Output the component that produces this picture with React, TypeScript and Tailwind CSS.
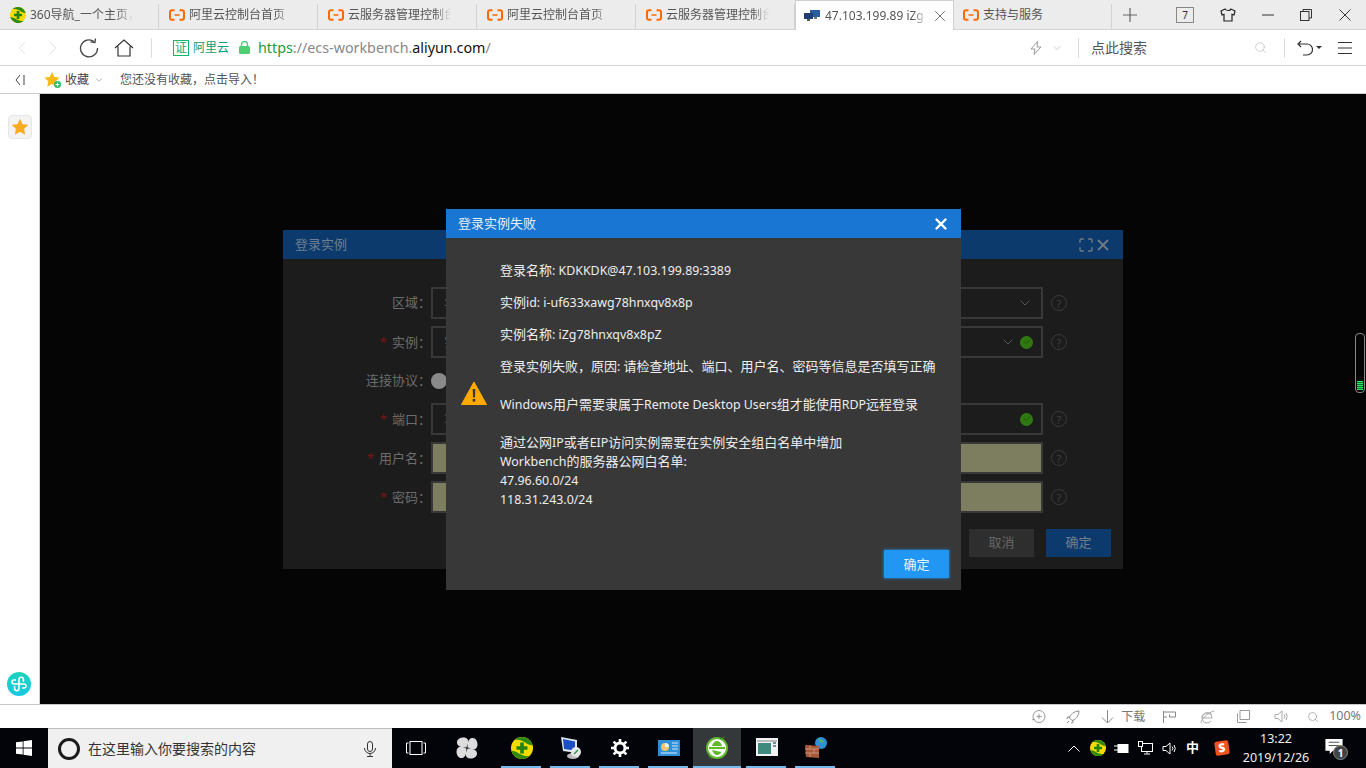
import React from "react";
import { Check, ChevronDown, ChevronLeft, ChevronRight, Maximize, Search, X } from "lucide-react";

const Logo360 = ({ s = 16 }: { s?: number }) => (
  <svg width={s} height={s} viewBox="0 0 24 24" className="shrink-0">
    <circle cx="12" cy="12" r="12" fill="#f7dc00" />
    <path d="M.5 15a12 12 0 0 0 20 5.500C15 22 10 19 7 17c-2-1.200-4.500-1.800-6.500-2zM23.500 9A12 12 0 0 0 3.500 3.500C9 2 14 5 17 7c2 1.200 4.500 1.800 6.500 2z" fill="#2e8b12" />
    <path d="M10 6h4v4h4v4h-4v4h-4v-4H6v-4h4z" fill="#26820f" />
  </svg>
);

const AliLogo = () => (
  <svg width="16" height="12" viewBox="0 0 16 12" className="shrink-0" fill="none">
    <path d="M5.500 1.200H3C1.800 1.200 1 2 1 3.200v5.600c0 1.200.8 2 2 2h2.500M10.500 1.200H13c1.200 0 2 .8 2 2v5.600c0 1.200-.8 2-2 2h-2.500" stroke="#ff6a00" strokeWidth="2" />
    <path d="M5.500 6h5" stroke="#ff6a00" strokeWidth="1.500" />
  </svg>
);

const NetLogo = () => (
  <svg width="16" height="12" viewBox="0 0 16 12" className="shrink-0">
    <rect x="6" y="0" width="10" height="7" fill="#2a5f9e" />
    <rect x="0" y="3" width="9" height="6" fill="#1d3f73" />
    <rect x="3" y="9" width="3" height="2" fill="#555" />
    <rect x="10" y="7" width="3" height="2" fill="#777" />
  </svg>
);

const tabs = [
  { t: "360导航_一个主页，", k: "360" },
  { t: "阿里云控制台首页", k: "ali" },
  { t: "云服务器管理控制台", k: "ali" },
  { t: "阿里云控制台首页", k: "ali" },
  { t: "云服务器管理控制台", k: "ali" },
];

const Tab = ({ t, k }: { t: string; k: string }) => (
  <div className="relative flex h-full w-[159px] shrink-0 items-center gap-[4px] pl-[10px]">
    {k === "360" ? <Logo360 /> : <AliLogo />}
    <span className="w-[108px] overflow-hidden whitespace-nowrap text-[12px] text-[#555] [mask-image:linear-gradient(to_right,black_80%,transparent_96%)]">{t}</span>
    <span className="absolute right-0 bottom-0 h-[25px] w-px bg-[#d2d2d2]" />
  </div>
);

const TopBar = () => (
  <div className="flex h-[30px] shrink-0 items-stretch border-b border-[#d3d3d3] bg-[#ececec]">
    {tabs.map((x, i) => <Tab key={i} {...x} />)}
    <div className="relative z-10 mb-[-1px] flex h-[30px] w-[159px] shrink-0 items-center border-x border-t border-[#cfcfcf] bg-white pl-[8px]">
      <NetLogo />
      <span className="ml-[5px] w-[103px] overflow-hidden whitespace-nowrap text-[12px] text-[#555] [mask-image:linear-gradient(to_right,black_85%,transparent)]">47.103.199.89 iZg</span>
      <X size={18} strokeWidth={1} className="ml-[3px] text-[#444]" />
    </div>
    <div className="relative flex w-[158px] shrink-0 items-center gap-[4px] pl-[9px]">
      <AliLogo />
      <span className="text-[12px] text-[#555]">支持与服务</span>
      <span className="absolute right-0 bottom-0 h-[25px] w-px bg-[#d2d2d2]" />
    </div>
    <div className="flex flex-1 items-center text-[#444]">
      <svg width="14" height="14" viewBox="0 0 14 14" className="ml-[11px]" stroke="#666" strokeWidth="1.200"><path d="M7 0v14M0 7h14" /></svg>
      <span className="ml-[39px] flex h-[16px] w-[18px] items-center justify-center border border-[#888] text-[10px] leading-none text-[#333]">7</span>
      <svg width="16" height="14" viewBox="0 0 16 14" className="ml-[26px]" fill="none" stroke="#222" strokeWidth="1.200"><path d="M5 1 1 3l1 4 2-.7V13h8V6.300l2 .7 1-4-4-2c-.5 2-4.500 2-6 0z" /></svg>
      <svg width="12" height="2" viewBox="0 0 12 2" className="ml-[26px]"><path d="M0 1h12" stroke="#333" strokeWidth="1" /></svg>
      <svg width="12" height="12" viewBox="0 0 12 12" className="ml-[26px]" fill="none" stroke="#333"><rect x=".5" y="2.500" width="8.500" height="9" /><path d="M3 2.500V.5h8.500V9H9" /></svg>
      <svg width="12" height="12" viewBox="0 0 12 12" className="ml-[27px]" stroke="#333" strokeWidth="1"><path d="M.5.5l11 11M11.500.5l-11 11" /></svg>
    </div>
  </div>
);

const AddressBar = () => (
  <div className="flex h-[36px] shrink-0 items-center border-b border-[#d6d6d6] bg-white">
    <ChevronLeft size={22} strokeWidth={1} className="ml-[11px] text-[#ddd]" />
    <ChevronRight size={22} strokeWidth={1} className="ml-[9px] text-[#ddd]" />
    <svg width="20" height="20" viewBox="0 0 20 20" className="ml-[15px]" fill="none" stroke="#444" strokeWidth="1.300"><path d="M15 3.500A8.500 8.500 0 1 0 18.500 10" /><path d="M11.500 3.800 16 4.500l.5-4" /></svg>
    <svg width="20" height="18" viewBox="0 0 20 18" className="ml-[15px]" fill="none" stroke="#333" strokeWidth="1.200"><path d="M1 9 10 1l9 8M4 7.500V17h12V7.500" /></svg>
    <span className="ml-[17px] h-[20px] w-px bg-[#ddd]" />
    <span className="ml-[21px] flex h-[16px] w-[16px] items-center justify-center border border-[#12b76a] text-[12px] leading-none text-[#0ca678]">证</span>
    <span className="ml-[4px] text-[12px] text-[#0b9e7b]">阿里云</span>
    <svg width="11" height="13" viewBox="0 0 11 13" className="ml-[10px]"><path d="M2.500 6V3.500a3 3 0 0 1 6 0V6" fill="none" stroke="#4fce74" strokeWidth="1.400" /><rect y="5" width="11" height="8" rx="1.500" fill="#4fce74" /></svg>
    <span className="ml-[8px] w-[235px] text-[14.300px] whitespace-nowrap text-[#888]"><span className="text-[#1d9a3c]">https</span>://ecs-workbench.<span className="text-[#111]">aliyun.com</span>/</span>
    <div className="ml-[537px] flex items-center">
      <svg width="12" height="14" viewBox="0 0 12 14" fill="none" stroke="#999" strokeWidth="1"><path d="M7.500.5 1 8h4l-1 5.500L11 6H7z" /></svg>
      <ChevronDown size={12} strokeWidth={1} className="ml-[9px] text-[#999]" />
      <span className="ml-[15px] h-[20px] w-px bg-[#ddd]" />
      <span className="ml-[12px] w-[158px] text-[14px] text-[#555]">点此搜索</span>
      <Search size={13} strokeWidth={1} className="ml-[5px] text-[#aaa]" />
      <span className="ml-[17px] h-[20px] w-px bg-[#ddd]" />
      <svg width="16" height="16" viewBox="0 0 16 16" className="ml-[12px]" fill="none" stroke="#333" strokeWidth="1.200"><path d="M1 4h9a5 5 0 0 1 0 11H6M4 1 1 4l3 3" /></svg>
      <span className="ml-[3px] h-0 w-0 border-x-[3px] border-t-[3px] border-x-transparent border-t-[#333]" />
      <svg width="14" height="12" viewBox="0 0 14 12" className="ml-[16px]" stroke="#333" strokeWidth="1.100"><path d="M0 .5h14M0 6h14M0 11.500h14" /></svg>
    </div>
  </div>
);

const BookmarkBar = () => (
  <div className="flex h-[28px] shrink-0 items-center border-b border-[#cfcfcf] bg-white">
    <svg width="10" height="12" viewBox="0 0 10 12" className="ml-[15px]" fill="none" stroke="#444"><path d="M5 1 1 6l4 5M9 1v10" /></svg>
    <svg width="18" height="18" viewBox="0 0 18 18" className="ml-[19px]">
      <path d="M8 1l2.300 5 5.400.6-4 3.700 1.100 5.400L8 13l-4.800 2.700 1.100-5.400-4-3.700L5.700 6z" fill="#fdb813" />
      <circle cx="13.500" cy="13.500" r="3.500" fill="#2dbb63" />
      <path d="M13.500 11.500v4M11.500 13.500h4" stroke="#fff" strokeWidth="1" />
    </svg>
    <span className="ml-[3px] text-[12px] text-[#444]">收藏</span>
    <ChevronDown size={10} strokeWidth={1.200} className="ml-[5px] text-[#666]" />
    <span className="ml-[16px] text-[12px] text-[#555]">您还没有收藏，点击导入！</span>
  </div>
);

const Sidebar = () => (
  <div className="flex w-[40px] shrink-0 flex-col items-center justify-between border-r border-[#d0d0d0] bg-white pt-[21px] pb-[8px]">
    <span className="ml-[1px] flex h-[24px] w-[24px] items-center justify-center rounded-[4px] border border-[#e6e6e6] bg-[#f3f3f3]">
      <svg width="16" height="16" viewBox="0 0 16 16"><path d="M8 .5l2.300 5 5.400.6-4 3.700 1.100 5.400L8 12.500l-4.800 2.700 1.100-5.400-4-3.700L5.700 5.500z" fill="#fcab1e" stroke="#f59c12" strokeWidth=".5" /></svg>
    </span>
    <span className="mr-[1px] flex h-[24px] w-[24px] items-center justify-center rounded-full bg-gradient-to-b from-[#1ed3bb] to-[#16c8e0]">
      <svg width="16" height="16" viewBox="0 0 16 16" fill="none" stroke="#fff" strokeWidth="1.600"><path d="M8 8V3.500a2.200 2.200 0 0 1 4.400 0V6M8 8v4.500a2.200 2.200 0 0 1-4.400 0V10M8 8H3a2 2 0 0 1 0-4h2M8 8h5a2 2 0 0 1 0 4h-2" /></svg>
    </span>
  </div>
);

const Help = () => (
  <span className="ml-[8px] flex h-[16px] w-[16px] shrink-0 items-center justify-center rounded-full border border-[#3a3a3a] text-[11px] leading-none text-[#3f3f3f]">?</span>
);

const Ok = () => (
  <span className="flex h-[13px] w-[13px] items-center justify-center rounded-full bg-[#2f7a10]">
    <Check size={8} strokeWidth={2} className="text-[#1b3a10]" />
  </span>
);

const Row = ({ label, req, value, fill, chev, ok }: { label: string; req?: boolean; value?: string; fill?: boolean; chev?: boolean; ok?: boolean }) => (
  <div className="flex h-[32px] items-center">
    <div className={`flex w-[141px] shrink-0 items-center justify-end text-[13px] text-[#6c6c6c] ${req ? "pt-[2px]" : ""}`}>
      {req && <span className="mr-[5px] text-[#7d1313]">*</span>}
      {label}：
    </div>
    <div className={`flex h-[32px] w-[612px] shrink-0 items-center gap-[4px] border-2 border-[#383838] pl-[11px] pr-[8px] text-[13px] text-[#555] ${fill ? "bg-[#7d7d5f]" : "bg-[#1c1c1c]"}`}>
      <span className="flex-1">{value}</span>
      {chev && <ChevronDown size={16} strokeWidth={1} className="text-[#777]" />}
      {ok && <Ok />}
    </div>
    <Help />
  </div>
);

const BackDialog = () => (
  <div className="absolute top-[230px] left-[283px] flex h-[339px] w-[840px] flex-col bg-[#1c1c1c]">
    <div className="flex h-[29px] shrink-0 items-center justify-between bg-[#0c3a6c] pr-[11px] pl-[12px]">
      <span className="text-[13px] text-[#6e7f90]">登录实例</span>
      <span className="flex items-center text-[#707c88]">
        <Maximize size={16} strokeWidth={2} />
        <X size={18} strokeWidth={2.400} />
      </span>
    </div>
    <div className="flex flex-1 flex-col gap-[7px] pt-[28px] pl-[7px]">
      <Row label="区域" value="华" chev />
      <Row label="实例" req value="实" chev ok />
      <div className="flex h-[31px] items-center">
        <div className="flex w-[141px] shrink-0 items-center justify-end text-[13px] text-[#6c6c6c]">连接协议：</div>
        <span className="h-[16px] w-[16px] rounded-full bg-[#8a8a8a]" />
      </div>
      <Row label="端口" req value="3" ok />
      <Row label="用户名" req fill />
      <Row label="密码" req fill />
      <div className="mt-[9px] flex justify-end gap-[12px] pr-[12px]">
        <span className="flex h-[28px] w-[65px] items-center justify-center bg-[#2e2e2e] text-[13px] text-[#666]">取消</span>
        <span className="flex h-[28px] w-[65px] items-center justify-center bg-[#0c3a6c] text-[13px] text-[#6e7f90]">确定</span>
      </div>
    </div>
  </div>
);

const Mix = ({ t, className }: { t: string; className?: string }) => (
  <p className={className}>
    {t.split(/([\x20-\x7e]+)/).map((s, i) =>
      i % 2 === 1 ? <span key={i} className="text-[12.400px]">{s}</span> : <span key={i}>{s}</span>
    )}
  </p>
);

const FrontDialog = () => (
  <div className="absolute top-[209px] left-[446px] flex h-[381px] w-[515px] flex-col bg-[#383838] text-[#eee]">
    <div className="flex h-[29px] shrink-0 items-center justify-between bg-[#1976d2] pr-[11px] pl-[12px]">
      <span className="text-[13px] text-[#e6eef8]">登录实例失败</span>
      <X size={18} strokeWidth={3.200} className="text-white" />
    </div>
    <div className="relative flex-1 pt-[23px] pl-[54px] text-[13px] leading-[19px]">
      <svg width="26" height="24" viewBox="0 0 26 24" className="absolute top-[143px] left-[15px]">
        <path d="M13 1 25.500 23.500H.5z" fill="#ffaa00" stroke="#ffaa00" strokeWidth="1" strokeLinejoin="round" />
        <path d="M11.700 8h2.600l-.3 8.500h-2z" fill="#383838" />
        <rect x="11.700" y="18" width="2.600" height="2.600" fill="#383838" />
      </svg>
      <Mix t="登录名称: KDKKDK@47.103.199.89:3389" />
      <Mix className="mt-[13px]" t="实例id: i-uf633xawg78hnxqv8x8p" />
      <Mix className="mt-[13px]" t="实例名称: iZg78hnxqv8x8pZ" />
      <Mix className="mt-[13px]" t="登录实例失败，原因: 请检查地址、端口、用户名、密码等信息是否填写正确" />
      <Mix className="mt-[19px]" t="Windows用户需要隶属于Remote Desktop Users组才能使用RDP远程登录" />
      <Mix className="mt-[19px]" t="通过公网IP或者EIP访问实例需要在实例安全组白名单中增加" />
      <Mix t="Workbench的服务器公网白名单:" />
      <Mix t="47.96.60.0/24" />
      <Mix t="118.31.243.0/24" />
      <span className="absolute right-[12px] bottom-[12px] flex h-[28px] w-[65px] items-center justify-center bg-[#2196f3] text-[13px] text-[#eaf4fe] shadow-[0_0_3px_#2196f3]">确定</span>
    </div>
  </div>
);

const StatusBar = () => (
  <div className="flex h-[24px] shrink-0 items-center justify-end border-t border-[#c9c9c9] bg-white pr-[5px] text-[#999]">
    <svg width="15" height="15" viewBox="0 0 15 15" fill="none" stroke="#999"><circle cx="8" cy="7.500" r="6" /><path d="M8 5v5M5.500 7.500h5M1 11l3-1" /></svg>
    <svg width="14" height="14" viewBox="0 0 14 14" className="ml-[20px]" fill="none" stroke="#888"><path d="M13 1C8 1 4 5 3.500 8L6 10.500C9 10 13 6 13 1zM4 7H1.500L1 9M7 10v2.500L5 13M3 11l-2 2" /></svg>
    <svg width="13" height="14" viewBox="0 0 13 14" className="ml-[21px]" fill="none" stroke="#888"><path d="M6.500 0v13M1 7.500l5.500 5.500L12 7.500" /></svg>
    <span className="ml-[7px] text-[12px] text-[#777]">下载</span>
    <svg width="13" height="12" viewBox="0 0 13 12" className="ml-[18px]" fill="none" stroke="#888"><path d="M.5 0v12M.5 1h12v5h-6V3.500M.5 6H4" /></svg>
    <svg width="15" height="14" viewBox="0 0 15 14" className="ml-[24px]" fill="none" stroke="#aaa"><path d="M2 8h10a5 5 0 1 0-1 3M2 8a5.500 5.500 0 0 1 10-3M1 13c0-3 6-10 13-12" /></svg>
    <svg width="13" height="13" viewBox="0 0 13 13" className="ml-[22px]" fill="none" stroke="#999"><path d="M.5 3.500v9h9M3 .5h9.500v9H3z" /></svg>
    <svg width="15" height="13" viewBox="0 0 15 13" className="ml-[24px]" fill="none" stroke="#aaa"><path d="M1 4.500v4h3l4 3.500V1L4 4.500zM10 4.500a3 3 0 0 1 0 4M12 3a6 6 0 0 1 0 7" /></svg>
    <Search size={12} strokeWidth={1.200} className="ml-[18px] text-[#888]" />
    <span className="ml-[10px] text-[12.500px] text-[#777]">100%</span>
  </div>
);

const WinIcon = () => (
  <svg width="16" height="16" viewBox="0 0 16 16" fill="#fff"><path d="M0 2.300 6.700 1.400v6.100H0zM7.500 1.300 16 0v7.500H7.500zM0 8.400h6.700v6.200L0 13.700zM7.500 8.400H16V16l-8.500-1.200z" /></svg>
);

const Task = ({ children, active }: { children: React.ReactNode; active?: boolean }) => (
  <div className={`relative flex h-full shrink-0 items-center justify-center ${active ? "mr-[1px] w-[48px] bg-[#35383b]" : "w-[49px]"}`}>
    {children}
    <span className={`absolute bottom-0 h-[2px] bg-[#76b9ed] ${active ? "left-0 w-full" : "left-[4px] w-[40px]"}`} />
  </div>
);

const Taskbar = () => (
  <div className="flex h-[40px] shrink-0 items-center bg-[#02040a] text-white">
    <div className="flex h-full w-[48px] shrink-0 items-center justify-center"><WinIcon /></div>
    <div className="flex h-full w-[344px] shrink-0 items-center border-t border-[#bdbdbd] bg-[#f0f0f0] pl-[10px]">
      <span className="h-[22px] w-[22px] rounded-full border-[3px] border-[#1a1a1a]" />
      <span className="ml-[8px] w-[276px] text-[14px] text-[#333]">在这里输入你要搜索的内容</span>
      <svg width="12" height="16" viewBox="0 0 12 16" fill="none" stroke="#333"><rect x="3.500" y=".5" width="5" height="10" rx="2.500" /><path d="M.5 7a5.500 5.500 0 0 0 11 0M6 12.500V15M3 15.500h6" /></svg>
    </div>
    <div className="flex h-full w-[48px] shrink-0 items-center justify-center">
      <svg width="20" height="14" viewBox="0 0 20 14" fill="none" stroke="#fff"><rect x="4" y=".5" width="12" height="13" /><path d="M2.500 2H.5v10h2M17.500 2h2v10h-2" /></svg>
    </div>
    <div className="flex h-full w-[57px] shrink-0 items-center pl-[16px]">
      <svg width="22" height="22" viewBox="0 0 22 22" fill="#ddd">
        {[0, 90, 180, 270].map((r) => (
          <path key={r} transform={`rotate(${r} 11 11)`} d="M10.500 10.500C6 10.500 1.500 9.500 1 6 .5 2.500 4 .5 7.500.5c3 0 5 2 5 4.500 0 2-1.500 3-2 5.500z" />
        ))}
      </svg>
    </div>
    <div className="flex h-full items-stretch">
      <Task><Logo360 s={22} /></Task>
      <Task>
        <svg width="24" height="24" viewBox="0 0 24 24"><path d="M2 1l16 3v13L4 15z" fill="#dfe6ee" /><path d="M4 3l12 2.500v9L5 13z" fill="#1d4fc4" /><ellipse cx="14" cy="20" rx="6" ry="3" fill="#bbb" /><circle cx="17" cy="16" r="5" fill="#e8e8e8" /><path d="M15 18l4-4" stroke="#2a9a3c" strokeWidth="1.500" /></svg>
      </Task>
      <Task><svg width="18" height="18" viewBox="0 0 18 18" fill="none"><circle cx="9" cy="9" r="5" stroke="#fff" strokeWidth="3" /><path d="M9 0v3M9 15v3M0 9h3M15 9h3M2.600 2.600l2.100 2.100M13.300 13.300l2.100 2.100M15.400 2.600l-2.100 2.100M4.700 13.300l-2.100 2.100" stroke="#fff" strokeWidth="2.600" /></svg></Task>
      <Task><svg width="22" height="16" viewBox="0 0 22 16"><rect width="22" height="16" fill="#2f8fd8" /><circle cx="7" cy="7" r="4" fill="#f0c674" /><path d="M7 7V3a4 4 0 0 1 4 4z" fill="#e8f4ff" /><path d="M14 3h6M14 6h6M14 9h6M3 13h16" stroke="#d8ecff" /></svg></Task>
      <Task active>
        <svg width="24" height="24" viewBox="0 0 24 24"><circle cx="12" cy="12" r="10" fill="#fff" stroke="#62b82d" strokeWidth="2" /><path d="M4 12h16" stroke="#62b82d" strokeWidth="2.200" /><path d="M7 10c.5-3 3-5 5-5s4.500 2 5 5zM7 14c1 3 3 5 5 5s3.500-1 4.500-3" fill="#62b82d" /><path d="M15 3c2-2 4-1 5-2M3 17c0 3 2 5 4 6" stroke="#2e7d1b" fill="none" /></svg>
      </Task>
      <Task><svg width="22" height="20" viewBox="0 0 22 20"><rect width="22" height="18" fill="#f2f2f2" /><rect x="1" y="2" width="20" height="2" fill="#bbb" /><rect x="2" y="5" width="13" height="11" fill="#3f8a7d" /><path d="M17 5h3M17 8h3" stroke="#4a6a8a" strokeWidth="1.500" /></svg></Task>
      <Task>
        <svg width="24" height="24" viewBox="0 0 24 24"><circle cx="17" cy="7" r="6" fill="#2f8fd8" /><path d="M14 3c2 1 5 0 6 3-2 2-4 0-6-3z" fill="#5cb85c" /><path d="M1 9l14 1v12L2 21z" fill="#a65a3a" /><path d="M1 13h14M1 17h14M6 9v4M10 13v4M6 17v4" stroke="#d9a78c" strokeWidth=".7" /></svg>
      </Task>
    </div>
    <div className="ml-[228px] flex h-full flex-1 items-center text-white">
      <svg width="12" height="7" viewBox="0 0 12 7" fill="none" stroke="#fff"><path d="M.5 6.500 6 1l5.500 5.500" /></svg>
      <span className="ml-[10px]"><Logo360 s={16} /></span>
      <svg width="15" height="11" viewBox="0 0 15 11" className="ml-[8px]" fill="none" stroke="#fff"><rect x="4" y="1.500" width="10" height="8" fill="#fff" /><path d="M0 3h4M0 7h4" /></svg>
      <svg width="15" height="14" viewBox="0 0 15 14" className="ml-[9px]" fill="none" stroke="#fff"><rect x="3.500" y="2.500" width="11" height="8" /><rect x=".5" y=".5" width="4" height="5" fill="#02040a" /><path d="M9 10.500v2M6 13h6" /></svg>
      <svg width="16" height="13" viewBox="0 0 16 13" className="ml-[9px]" fill="none" stroke="#fff"><path d="M1 4.500v4h3l4 3.500V1L4 4.500zM10 4.500a3 3 0 0 1 0 4M12 3a6 6 0 0 1 0 7" /></svg>
      <span className="ml-[8px] text-[13px] font-bold">中</span>
      <span className="ml-[16px] flex h-[14px] w-[14px] rotate-[-8deg] items-center justify-center rounded-[2px] bg-[#f0511f] text-[12px] leading-none font-black text-white">S</span>
      <div className="ml-[11px] flex w-[72px] shrink-0 flex-col items-center text-[12.500px] leading-[19px] text-[#eee]">
        <span>13:22</span>
        <span>2019/12/26</span>
      </div>
      <div className="relative ml-[13px] h-[18px] w-[18px]">
        <svg width="18" height="15" viewBox="0 0 16 14"><path d="M0 0h16v11H7l-3 3v-3H0z" fill="#fff" /><path d="M3 3h10M3 6h10" stroke="#555" /></svg>
        <span className="absolute top-[6px] left-[8px] flex h-[15px] w-[15px] items-center justify-center rounded-full border border-[#888] bg-[#444] text-[10px] leading-none font-bold text-white">1</span>
      </div>
    </div>
  </div>
);

export default function App() {
  return (
    <div className="relative flex h-[768px] w-[1366px] flex-col overflow-hidden bg-white [font-family:'Noto_Sans','Noto_Sans_CJK_SC',sans-serif]">
      <TopBar />
      <AddressBar />
      <BookmarkBar />
      <div className="flex min-h-0 flex-1">
        <Sidebar />
        <div className="flex-1 bg-[#050505]" />
      </div>
      <StatusBar />
      <Taskbar />
      <BackDialog />
      <FrontDialog />
      <div className="absolute top-[333px] left-[1355px] flex h-[60px] w-[10px] flex-col justify-end rounded-[4px] border border-[#888] px-px pb-[2px]">
        <div className="flex h-[9px] flex-col gap-px bg-[#0b6a2c]">
          {[0, 1, 2, 3, 4].map((i) => <div key={i} className="h-px shrink-0 bg-[#22f060]" />)}
        </div>
      </div>
    </div>
  );
}
